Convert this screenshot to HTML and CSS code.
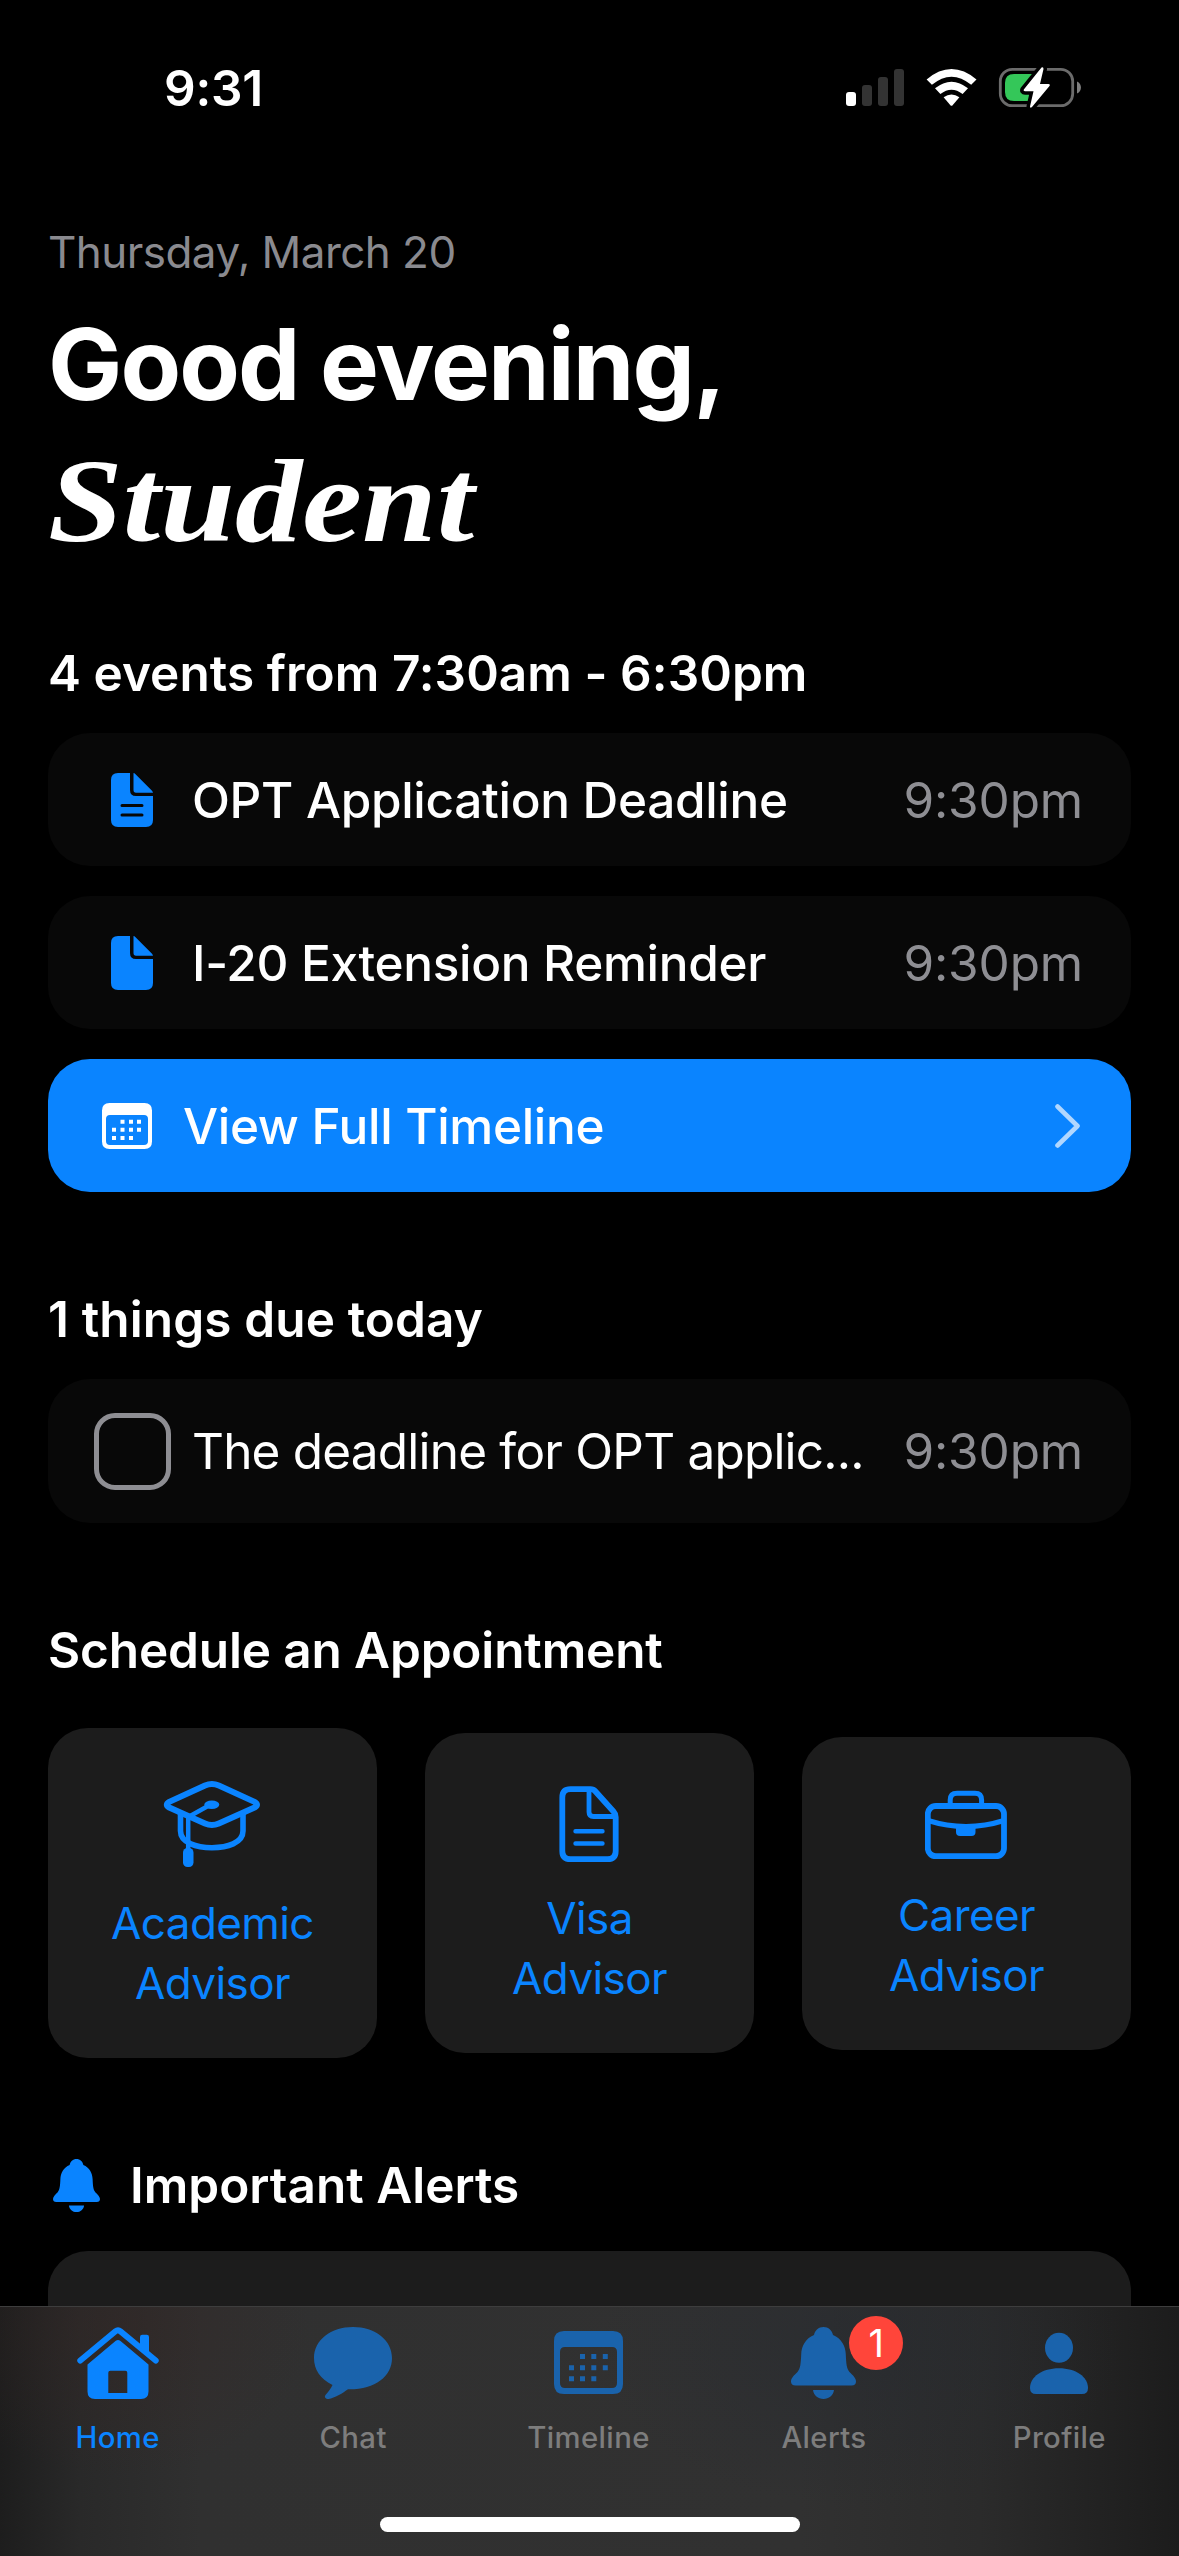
FILE: index.html
```html
<!DOCTYPE html>
<html lang="en">
<head>
<meta charset="utf-8">
<title>Home</title>
<link rel="stylesheet" href="styles.css">
</head>
<body>
<div class="screen">
  <header class="status">
    <span class="status-time">9:31</span>
    <svg class="status-icons" width="240" height="44" viewBox="845 66 240 44">
      <rect x="846" y="92" width="10" height="14" rx="3" fill="#fff"/>
      <g fill="#333"><rect x="862" y="85" width="10" height="21" rx="3"/><rect x="878" y="77" width="10" height="29" rx="3"/><rect x="894" y="69" width="10" height="37" rx="3"/></g>
      <g fill="#fff">
        <path d="M926.600 79.400 Q951.500 58.600 976.500 79.400 L971.200 84.800 Q951.500 68.500 931.900 84.800 Z"/>
        <path d="M935 88.300 Q951.500 75 968 88.300 L962.600 94 Q951.500 85.500 940.400 94 Z"/>
        <path d="M943.600 97.300 Q951.500 91.500 959.400 97.300 L952.600 105.200 Q951.500 106.300 950.400 105.200 Z"/>
      </g>
      <rect x="1000.300" y="69.300" width="72.400" height="36.400" rx="12" fill="none" stroke="#6b6b6b" stroke-width="2.800"/>
      <path d="M1077 81.500 C1082.300 83.500 1082.300 91.500 1077 93.500 Z" fill="#7f7f7f"/>
      <path d="M1014 74 H1034 V101 H1014 Q1005 101 1005 92 V83 Q1005 74 1014 74 Z" fill="#34c759"/>
      <path d="M1041.500 67.600 L1023.800 89.500 Q1023 91.300 1025 91.300 H1033.500 L1030 106.500 Q1030 108.500 1032 107 L1049.700 85.800 Q1050.500 84 1048.500 84 H1040 L1043.500 69 Q1043.500 66.500 1041.500 67.600 Z" fill="#fff" stroke="#000" stroke-width="7" paint-order="stroke"/>
    </svg>
  </header>

  <main class="content">
    <p class="date">Thursday, March 20</p>
    <h1 class="greeting">Good evening,</h1>
    <p class="name">Student</p>

    <section class="block">
      <h2 class="heading heading-events">4 events from 7:30am - 6:30pm</h2>
      <div class="list">
        <div class="row">
          <svg class="row-icon" width="42" height="54" viewBox="0 0 42 54" fill="#0a84ff"><path d="M7 0 H19 V17 Q19 23 25 23 H42 V47 Q42 54 35 54 H7 Q0 54 0 47 V7 Q0 0 7 0 Z"/><path d="M22.500 0 Q23.500 .200 24.300 1 L41 17.700 Q41.800 18.500 42 19.700 H25 Q22.500 19.700 22.500 17 Z"/><path d="M11 32.500 H31 M11 42 H31" stroke="#080808" stroke-width="3" stroke-linecap="round"/></svg>
          <span class="row-title medium">OPT Application Deadline</span><span class="time">9:30pm</span>
        </div>
        <div class="row">
          <svg class="row-icon" width="42" height="54" viewBox="0 0 42 54" fill="#0a84ff"><path d="M7 0 H19 V17 Q19 23 25 23 H42 V47 Q42 54 35 54 H7 Q0 54 0 47 V7 Q0 0 7 0 Z"/><path d="M22.500 0 Q23.500 .200 24.300 1 L41 17.700 Q41.800 18.500 42 19.700 H25 Q22.500 19.700 22.500 17 Z"/></svg>
          <span class="row-title medium">I-20 Extension Reminder</span><span class="time">9:30pm</span>
        </div>
        <div class="row row-primary">
          <svg class="cal-icon" width="50" height="46" viewBox="0 0 50 46" fill="#fff"><path fill-rule="evenodd" d="M7.500 0 H42.500 Q50 0 50 7.500 V38.500 Q50 46 42.500 46 H7.500 Q0 46 0 38.500 V7.500 Q0 0 7.500 0 Z M8 12 Q4 12 4 16 V38 Q4 42 8 42 H42 Q46 42 46 38 V16 Q46 12 42 12 Z"/><path d="M18.500 18.700h4M27 18.700h4M35 18.700h4M10 26.800h4M18.500 26.800h4M27 26.800h4M35 26.800h4M10 35h4M18.500 35h4M27 35h4" stroke="#fff" stroke-width="4"/></svg>
          <span class="row-title medium">View Full Timeline</span>
          <svg class="chevron" width="25" height="44" viewBox="0 0 25 44"><path d="M2.500 2.500 L22.500 22 L2.500 41.500" fill="none" stroke="#b1d7ff" stroke-width="4.600" stroke-linecap="round" stroke-linejoin="round"/></svg>
        </div>
      </div>
    </section>

    <section class="block">
      <h2 class="heading heading-due">1 things due today</h2>
      <div class="row row-task">
        <span class="checkbox"></span>
        <span class="row-title task-title">The deadline for OPT applic...</span><span class="time">9:30pm</span>
      </div>
    </section>

    <section class="block">
      <h2 class="heading heading-schedule">Schedule an Appointment</h2>
      <div class="advisors">
        <div class="advisor">
          <svg width="98" height="96" viewBox="163 1773 98 96" fill="none" stroke="#0a84ff" stroke-width="6"><path d="M205 1785.500 Q211.900 1782.500 218.800 1785.500 L254.500 1801.800 Q259.500 1804.700 254.500 1807.600 L218.800 1823.500 Q211.900 1826.500 205 1823.500 L169.300 1807.600 Q164.300 1804.700 169.300 1801.800 Z"/><path d="M180.500 1813 V1831 C180.500 1843 197 1847.700 212 1847.700 S243 1843 243 1831 V1813" stroke-width="5.600"/><path d="M188.200 1850 V1817 L208 1806" stroke-width="4.500"/><ellipse cx="211.800" cy="1804.800" rx="7.500" ry="4.200" fill="#0a84ff" stroke="none"/><rect x="183" y="1848" width="10.500" height="19" rx="4.500" fill="#0a84ff" stroke="none"/></svg>
          <span class="advisor-name">Academic<br>Advisor</span>
        </div>
        <div class="advisor">
          <svg width="60" height="86" viewBox="558.500 1778 60 86" fill="none" stroke="#0a84ff" stroke-width="5.800" stroke-linejoin="round"><path d="M570 1789.200 H590 Q593 1789.200 595 1791.500 L613 1811.500 Q615.200 1814 615.200 1817 V1851 Q615.200 1859.200 607 1859.200 H570 Q561.800 1859.200 561.800 1851 V1797.500 Q561.800 1789.200 570 1789.200 Z"/><path d="M588.500 1790 V1812 Q588.500 1816.500 593 1816.500 H615" stroke-width="4.800"/><path d="M575 1831.200 H602 M575 1843.500 H602" stroke-width="4.400" stroke-linecap="round"/></svg>
          <span class="advisor-name">Visa<br>Advisor</span>
        </div>
        <div class="advisor">
          <svg width="82" height="79" viewBox="925 1782 82 79" fill="none" stroke="#0a84ff" stroke-width="5.800"><rect x="927.800" y="1806" width="76.200" height="50.200" rx="8"/><path d="M950.200 1805 V1800 Q950.200 1793.200 957 1793.200 H975 Q981.600 1793.200 981.600 1800 V1805" stroke-width="5"/><path d="M928 1820.500 Q966 1832.500 1004 1820.500" stroke-width="5"/><path d="M956 1826 H975.500 V1832 Q975.500 1836 971.500 1836 H960 Q956 1836 956 1832 Z" fill="#0a84ff" stroke="none"/></svg>
          <span class="advisor-name">Career<br>Advisor</span>
        </div>
      </div>
    </section>

    <section class="block">
      <div class="alerts-head">
        <svg width="47" height="53" viewBox="0 0 65 72" preserveAspectRatio="none" fill="#0a84ff"><path d="M32.500 0 C37.500 0 41 3.500 42 8 C50.500 11.500 54.500 19 54.800 27.500 C55.200 36 55.500 41.500 58.500 45 C62 48.500 65 51 65 54.500 Q65 58.500 60.500 58.500 H4.500 Q0 58.500 0 54.500 C0 51 3 48.500 6.500 45 C9.500 41.500 9.800 36 10.200 27.500 C10.500 19 14.500 11.500 23 8 C24 3.500 27.500 0 32.500 0 Z M22 63 H43 C42.300 68.500 38 72 32.500 72 S22.700 68.500 22 63 Z"/></svg>
        <h2 class="heading">Important Alerts</h2>
      </div>
      <div class="alert-card"></div>
    </section>
  </main>

  <nav class="tabs">
    <div class="tab active">
      <svg width="82" height="72" viewBox="0 0 82 72" fill="currentColor"><path d="M3.300 33.500 L38.500 4.300 Q41 2.300 43.500 4.300 L78.700 33.500" fill="none" stroke="currentColor" stroke-width="6" stroke-linecap="round" stroke-linejoin="round"/><path d="M63 21 V10 Q63 7.700 65.300 7.700 H69.700 Q72 7.700 72 10 V29 Z"/><path fill-rule="evenodd" d="M38.800 13.800 Q41 12 43.200 13.800 L71.500 37.500 V64.500 Q71.500 72 64 72 H18 Q10.500 72 10.500 64.500 V37.500 Z M33.300 43.700 Q31.300 43.700 31.300 45.700 V66 H50.300 V45.700 Q50.300 43.700 48.300 43.700 Z"/></svg>
      <span class="tab-label">Home</span>
    </div>
    <div class="tab">
      <svg width="78" height="72" viewBox="0 0 78 72" fill="currentColor"><path d="M39 0 C61 0 78 13 78 31 C78 50 60 63 34 62.300 C28 66.500 21 71 14.500 72 C11.500 72 10 70 11.500 68 C14.500 65 17 61 18.500 58 C6 52 0 42.500 0 31 C0 13 17 0 39 0 Z"/></svg>
      <span class="tab-label">Chat</span>
    </div>
    <div class="tab">
      <svg width="69" height="72" viewBox="0 0 69 72" fill="currentColor"><path fill-rule="evenodd" d="M10 4 H59 Q69 4 69 14 V57 Q69 67 59 67 H10 Q0 67 0 57 V14 Q0 4 10 4 Z M11 20 Q6 20 6 25 V56 Q6 61 11 61 H58 Q63 61 63 56 V25 Q63 20 58 20 Z"/><path d="M26 29.500h5M37.300 29.500h5M48.800 29.500h5M15 40.700h5M26 40.700h5M37.300 40.700h5M48.800 40.700h5M15 51.700h5M26 51.700h5M37.300 51.700h5" stroke="currentColor" stroke-width="5"/></svg>
      <span class="tab-label">Timeline</span>
    </div>
    <div class="tab">
      <svg width="65" height="72" viewBox="0 0 65 72" fill="currentColor"><path d="M32.500 0 C37.500 0 41 3.500 42 8 C50.500 11.500 54.500 19 54.800 27.500 C55.200 36 55.500 41.500 58.500 45 C62 48.500 65 51 65 54.500 Q65 58.500 60.500 58.500 H4.500 Q0 58.500 0 54.500 C0 51 3 48.500 6.500 45 C9.500 41.500 9.800 36 10.200 27.500 C10.500 19 14.500 11.500 23 8 C24 3.500 27.500 0 32.500 0 Z M22 63 H43 C42.300 68.500 38 72 32.500 72 S22.700 68.500 22 63 Z"/></svg>
      <span class="badge">1</span>
      <span class="tab-label">Alerts</span>
    </div>
    <div class="tab">
      <svg width="58" height="72" viewBox="0 0 58 72" fill="currentColor"><ellipse cx="29" cy="20.800" rx="14" ry="15"/><path d="M0 61 C0 50 12 41.300 29 41.300 S58 50 58 61 Q58 67 52 67 H6 Q0 67 0 61 Z"/></svg>
      <span class="tab-label">Profile</span>
    </div>
    <div class="home-indicator"></div>
  </nav>
</div>
</body>
</html>
```
FILE: styles.css
```css
* { box-sizing: border-box; }
body { margin: 0; background: #000; }
h1, h2, p { margin: 0; }
svg { display: block; flex: none; }
.screen {
  position: relative;
  width: 1179px;
  height: 2556px;
  overflow: hidden;
  background: #000;
  color: #fff;
  font-family: Inter, "Liberation Sans", sans-serif;
  font-size: 49.5px;
  line-height: 60px;
  white-space: nowrap;
}
.status {
  display: flex;
  justify-content: space-between;
  height: 225px;
  padding: 58px 94px 0 164px;
}
.status-time { font-weight: 600; letter-spacing: -.2px; }
.status-icons { margin-top: 8px; }
.content { padding: 0 48px; }
.date { font-size: 44px; line-height: 54px; letter-spacing: -.55px; color: #8a8a8f; }
.greeting { margin-top: 24px; font-size: 99px; font-weight: 700; line-height: 122px; letter-spacing: -1.9px; }
.name {
  margin-top: 9px;
  width: fit-content;
  font: italic 700 118px/136px "Liberation Serif", serif;
  transform: scaleX(1.14);
  transform-origin: left;
}
.block { margin-top: 97px; }
.name + .block { margin-top: 73px; }
.heading { font-size: 49.5px; font-weight: 600; line-height: 60px; }
.heading-events { letter-spacing: .05px; }
.heading-due { letter-spacing: .12px; }
.heading-schedule { letter-spacing: -.14px; }
.list { display: flex; flex-direction: column; gap: 30px; margin-top: 30px; }
.row {
  display: flex;
  align-items: center;
  height: 133px;
  padding: 0 48px;
  border-radius: 42px;
  background: #080808;
}
.row-icon { margin: 0 39px 0 15px; }
.row-title { flex: 1; }
.medium { font-weight: 500; letter-spacing: -.33px; }
.time { color: #8e8e93; letter-spacing: -.15px; }
.row-primary { background: #0a84ff; }
.cal-icon { margin: 0 31px 0 6px; }
.chevron { margin-right: 3px; }
.row-task { height: 144px; margin-top: 30px; }
.task-title { letter-spacing: -.8px; }
.checkbox {
  flex: none;
  width: 77px;
  height: 77px;
  margin: 0 21px 0 -2px;
  border: 5px solid #8e8e93;
  border-radius: 21px;
}
.advisors { display: flex; align-items: center; gap: 48px; margin-top: 48px; }
.advisor {
  flex: 1;
  display: flex;
  flex-direction: column;
  align-items: center;
  gap: 24px;
  padding: 45px 0;
  border-radius: 40px;
  background: #1c1c1c;
  color: #0a84ff;
  font-size: 44px;
  letter-spacing: -.6px;
  text-align: center;
}
.advisor svg { margin-right: 2px; }
.alerts-head { display: flex; align-items: center; gap: 30px; padding-left: 5px; }
.alert-card { height: 300px; margin-top: 36px; border-radius: 40px; background: #1c1c1c; }

.tabs {
  position: absolute;
  inset: 2306px 0 0;
  display: flex;
  padding: 20px 2px 0 0;
  border-top: 1px solid #3d3d3d;
  background:
    radial-gradient(ellipse 190px 150px at 120px 20px, rgba(52, 38, 36, .5), transparent),
    radial-gradient(ellipse 260px 160px at 860px 40px, rgba(38, 42, 48, .6), transparent),
    linear-gradient(90deg, #1d1d1d 0, #292929 80px, #303030 200px, #313131 800px, #2b2b2b 980px, #1c1c1c 1179px);
}
.tab {
  position: relative;
  flex: 1;
  display: flex;
  flex-direction: column;
  align-items: center;
  color: #1a63ac;
}
.tab-label {
  margin-top: 21px;
  font-size: 29.3px;
  font-weight: 500;
  line-height: 36px;
  letter-spacing: .4px;
  color: #7d7d7d;
}
.active, .active .tab-label { color: #0a84ff; }
.badge {
  position: absolute;
  left: 143px;
  top: -11px;
  width: 54px;
  height: 54px;
  border-radius: 50%;
  background: #ff453a;
  color: #fff;
  font-size: 38px;
  line-height: 54px;
  text-align: center;
}
.home-indicator {
  position: absolute;
  left: 380px;
  bottom: 24px;
  width: 420px;
  height: 15px;
  border-radius: 8px;
  background: #fff;
}
```
